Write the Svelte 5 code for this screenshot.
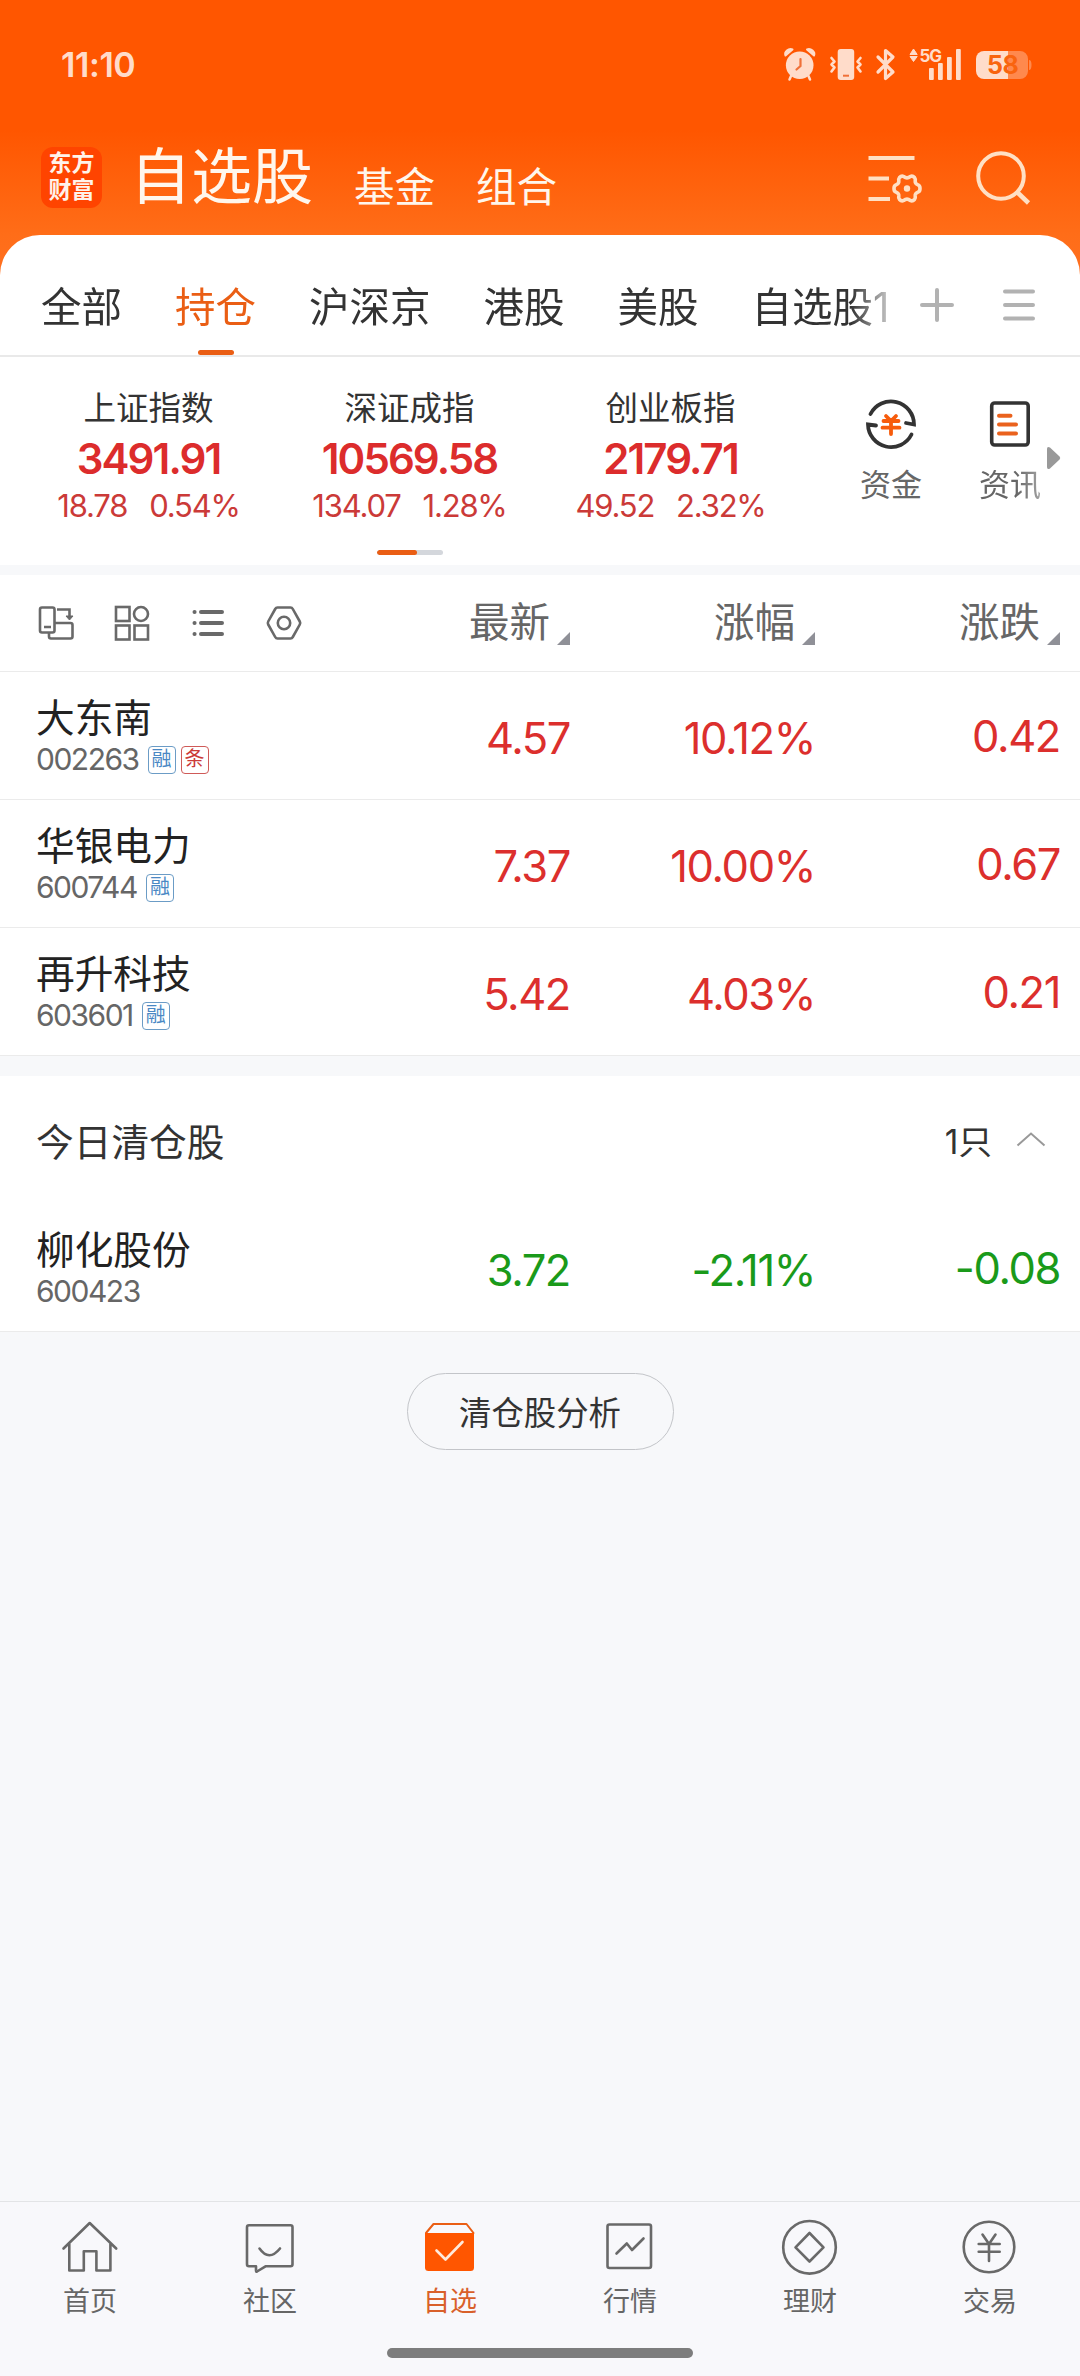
<script>
  const tabs = ['全部', '持仓', '沪深京', '港股', '美股', '自选股1'];
  const indices = [
    { name: '上证指数', value: '3491.91', change: '18.78', pct: '0.54%' },
    { name: '深证成指', value: '10569.58', change: '134.07', pct: '1.28%' },
    { name: '创业板指', value: '2179.71', change: '49.52', pct: '2.32%' }
  ];
  const columns = ['最新', '涨幅', '涨跌'];
  const stocks = [
    { name: '大东南', code: '002263', tags: ['融', '条'], last: '4.57', pct: '10.12%', diff: '0.42' },
    { name: '华银电力', code: '600744', tags: ['融'], last: '7.37', pct: '10.00%', diff: '0.67' },
    { name: '再升科技', code: '603601', tags: ['融'], last: '5.42', pct: '4.03%', diff: '0.21' }
  ];
  const closed = [
    { name: '柳化股份', code: '600423', tags: [], last: '3.72', pct: '-2.11%', diff: '-0.08' }
  ];
  const nav = ['首页', '社区', '自选', '行情', '理财', '交易'];
</script>

{#snippet stockRow(s, down)}
  <div class="row" class:down>
    <div class="stock">
      <div class="name">{s.name}</div>
      <div class="meta">
        <span class="code">{s.code}</span>
        {#each s.tags as t}<span class="tag" class:hot={t === '条'}>{t}</span>{/each}
      </div>
    </div>
    <div class="num">{s.last}</div>
    <div class="num">{s.pct}</div>
    <div class="num diff">{s.diff}</div>
  </div>
{/snippet}

<div class="screen">
  <header class="top">
    <div class="status">
      <span class="time">11:10</span>
      <svg class="sys" width="250" height="40" viewBox="782 45 250 40">
        <g fill="#ffdcca" stroke="none">
          <circle cx="799.7" cy="65.3" r="13.8" />
          <path d="M785.500 55.500c-1.500-3.500 3-7.500 7-6z M814 55.500c1.500-3.500-3-7.500-7-6z" stroke="#ffdcca" stroke-width="2" stroke-linejoin="round" />
          <path d="M791 76l-1.500 3.500M808.500 76l1.500 3.500" stroke="#ffdcca" stroke-width="2.500" stroke-linecap="round" />
          <rect x="837.700" y="49" width="16.500" height="31" rx="3" />
          <path d="M910 54.500l3.500-5.500 3.700 5.500zM910 56.500h7.200l-3.700 5z" stroke="#ffdcca" stroke-width="1" stroke-linejoin="round" />
          <rect x="929" y="68" width="4.800" height="12" rx="1" />
          <rect x="938" y="63" width="4.800" height="17" rx="1" />
          <rect x="947" y="57" width="4.800" height="23" rx="1" />
          <rect x="956" y="49" width="4.800" height="31" rx="1" />
        </g>
        <path d="M800.500 59v7l-4 3.500" fill="none" stroke="#f07038" stroke-width="2.200" stroke-linecap="round" />
        <path d="M843 75.700h6" stroke="#f07038" stroke-width="2" />
        <g fill="none" stroke="#ffdcca" stroke-width="2.600" stroke-linecap="round" stroke-linejoin="round">
          <path d="M831.500 58l3 3.500-3 3 3 3-3 4M860.500 58l-3 3.500 3 3-3 3 3 4" />
          <path stroke-width="3.200" d="M878 57l15 15-7.500 6.500v-28l7.500 6.500-15 15" />
        </g>
        <text class="net" x="919.500" y="61.800">5G</text>
        <path d="M1008 51h12a8 8 0 0 1 8 8v12a8 8 0 0 1-8 8h-12z M1029 60q2.500 0 2.500 5t-2.500 5z" fill="#ff894d" />
        <path d="M1008 51h-24a8 8 0 0 0-8 8v12a8 8 0 0 0 8 8h24z" fill="#ffdcca" />
        <text class="level" x="987" y="74">58</text>
      </svg>
    </div>
    <div class="titlebar">
      <div class="logo"><span>东方</span><span>财富</span></div>
      <h1>自选股</h1>
      <span class="sub">基金</span>
      <span class="sub">组合</span>
      <span class="grow"></span>
      <svg class="settings" width="54" height="54" viewBox="866 150 54 54" fill="none" stroke="#ffe0c4" stroke-width="4">
        <path d="M868.500 157h46M868.500 177.500h20.500M868.500 198h21.500" />
        <path stroke-width="3.600" stroke-linejoin="round" d="M899.500 176.500q2-2.200 4.200-1 3.300 2.600 6.600 0 2.200-1.200 4.200 1 1.200 1.600.7 3.500-.2 2.800 2.800 3.900 2.100.8 2 3.600.1 2.800-2 3.600-3 1.100-2.800 3.900.5 1.900-.7 3.500-2 2.200-4.200 1-3.300-2.600-6.600 0-2.200 1.200-4.200-1-1.200-1.600-.7-3.500.2-2.800-2.800-3.900-2.100-.8-2-3.600-.1-2.800 2-3.600 3-1.100 2.800-3.900-.5-1.900.7-3.500z" />
        <circle cx="907" cy="187.500" r="3.200" fill="#ffe0c4" stroke="none" />
      </svg>
      <svg width="60" height="60" viewBox="973 147 60 60" fill="none" stroke="#ffe0c4" stroke-width="4">
        <circle cx="1001" cy="175" r="22.800" /><path d="M1017 191l11.500 11" stroke-width="4.500" />
      </svg>
    </div>
    <nav class="tabs">
      <div class="tablist">
        {#each tabs as t, i}<span class="tab" class:active={i === 1}>{t}</span>{/each}
      </div>
      <svg class="plus" width="36" height="36" viewBox="0 0 36 36"><path d="M3 18h30M18 3v30" /></svg>
      <svg class="menu" width="36" height="36" viewBox="0 0 36 36"><path d="M4 4.500h28M4 18h28M4 31.500h28" /></svg>
    </nav>
  </header>

  <section class="indices">
    <div class="cards">
      {#each indices as x}
        <div class="index">
          <div class="iname">{x.name}</div>
          <div class="ivalue">{x.value}</div>
          <div class="ichange"><span>{x.change}</span><span>{x.pct}</span></div>
        </div>
      {/each}
      <div class="pager"><i></i></div>
    </div>
    <div class="quick">
      <svg width="54" height="54" viewBox="864 398 54 54" fill="none" stroke="#333" stroke-width="3.800" stroke-linecap="round">
        <path d="M870.500 415A23 23 0 0 1 914 425.500l-8-1.500" />
        <path d="M911.500 435.500A23 23 0 0 1 868 425.500l8 1" />
        <path d="M886 417l5 5 5-5M891 422v13M883.500 422h15M882.500 428.700h17" stroke="#f75c0c" />
      </svg>
      <span>资金</span>
    </div>
    <div class="quick news">
      <svg width="54" height="54" viewBox="983 398 54 54" fill="none" stroke="#333" stroke-width="3.600">
        <rect x="991.700" y="404" width="36.500" height="42" rx="3" />
        <path d="M999 416.700h11.500M999 425.500h17M999 434.500h17" stroke="#ea621d" stroke-linecap="round" stroke-width="4" />
      </svg>
      <span>资讯</span>
    </div>
    <svg class="more" width="14" height="24" viewBox="0 0 14 24"><path d="M0 3q0-3 3-1.500l9.500 9q1.500 1.500 0 3l-9.500 9Q0 24 0 21z" fill="#999" /></svg>
  </section>

  <section class="list">
    <div class="head">
      <div class="tools">
        <svg width="36" height="36" viewBox="0 0 36 36">
          <rect x="2" y="2.500" width="14.500" height="25" rx="2" /><path d="M6 22h7M19 4.500h12.500V12M17 18h15.500q2 0 2 2v11.500q0 2-2 2H13q-2 0-2-2v-4" /><path d="M28 11h7l-3.500 4z" fill="#696969" stroke-width="1" />
        </svg>
        <svg width="36" height="36" viewBox="0 0 36 36">
          <rect x="2" y="2" width="13.500" height="14" /><circle cx="27" cy="9" r="7" /><rect x="2" y="20.500" width="13.500" height="14" /><rect x="20.500" y="20.500" width="13.500" height="14" />
        </svg>
        <svg width="36" height="36" viewBox="0 0 36 36">
          <path stroke-width="4" stroke-linecap="round" d="M11 7h21M11 18h21M11 29h21M4.500 7h.1M4.500 18h.1M4.500 29h.1" />
        </svg>
        <svg width="36" height="36" viewBox="0 0 36 36">
          <path stroke-linejoin="round" d="M11.500 2.500h13q1.500 0 2.300 1.500l7 12.500q.8 1.500 0 3l-7 12.500q-.8 1.500-2.300 1.500h-13q-1.500 0-2.300-1.500l-7-12.500q-.8-1.500 0-3l7-12.500q.8-1.500 2.300-1.500z" /><circle cx="18" cy="18" r="6.200" />
        </svg>
      </div>
      {#each columns as c}
        <div class="col"><span>{c}</span><svg width="13" height="13" viewBox="0 0 13 13"><path d="M13 0v13H0z" fill="#8f9097" /></svg></div>
      {/each}
    </div>
    {#each stocks as s}{@render stockRow(s, false)}{/each}
  </section>

  <section class="closed">
    <div class="chead">
      <span class="ctitle">今日清仓股</span>
      <span class="count">1只</span>
      <svg width="30" height="16" viewBox="0 0 30 16"><path d="M1.500 14.500L15 2.500l13.500 12" fill="none" stroke="#999" stroke-width="2" /></svg>
    </div>
    {#each closed as s}{@render stockRow(s, true)}{/each}
  </section>

  <button class="analyse">清仓股分析</button>

  <footer class="nav">
    <div class="items">
      {#each nav as n, i}
        <div class="item" class:on={i === 2}>
          <svg width="60" height="60" viewBox="0 0 60 60">
            {#if i === 0}
              <path d="M3.500 31.500L29.700 6l26.500 25.500M9.300 27v26.500h14.500V34.300h12.600v19.200h14V27" />
            {:else if i === 1}
              <path d="M9 8.300h41.500q2 0 2 2v37q0 2-2 2H25.500L17 54.500q-1 .5-1-1v-4.200H9q-2 0-2-2v-37q0-2 2-2z" /><path d="M19.500 31.500q9.500 13.500 20.500 0" />
            {:else if i === 2}
              <path d="M6 16l7.500-9H46.500l7 9" stroke-width="2" /><path d="M5 16h49v34.500q0 3.500-3.500 3.500h-42Q5 54 5 50.500z" fill="#ff5600" stroke="none" /><path d="M16.500 33.500l9 9 17-17.500" stroke="#ffeadb" />
            {:else if i === 3}
              <rect x="7.500" y="7.500" width="43.500" height="43.500" rx="2" /><path d="M16.500 36.500l10.300-10 5.200 6.500 11.500-11.500" />
            {:else if i === 4}
              <circle cx="29.500" cy="30.300" r="26.300" /><path stroke-linejoin="round" d="M29.500 16l14 14.300-14 14.200-14-14.200z" />
            {:else}
              <circle cx="29" cy="30" r="25.300" /><path d="M22.500 17.500l6.500 9.500 6.500-9.500M18.700 27h21M18.700 34.700h21M29 27v17" />
            {/if}
          </svg>
          <span>{n}</span>
        </div>
      {/each}
    </div>
    <div class="homebar"></div>
  </footer>
</div>

<style>
  :global(body) { background: #f7f8fa; }
  .screen {
    box-sizing: border-box;
    width: 1080px; height: 2376px;
    display: flex; flex-direction: column;
    overflow: hidden;
    background: #f7f8fa; color: #333;
    font-family: Inter, "Noto Sans CJK SC", sans-serif;
    white-space: nowrap;
  }
  .screen * { box-sizing: border-box; }
  svg { display: block; flex: none; overflow: visible; }

  .top { background: linear-gradient(#ff5600 0, #ff5600 130px, #ff6d18 235px, #ff7020 275px); }
  .status { display: flex; justify-content: space-between; height: 120px; padding: 45px 48px 0 61px; }
  .time { color: #ffdcca; font-size: 34px; font-weight: 600; line-height: 39px; letter-spacing: -0.4px; }
  .net { fill: #ffdcca; font-size: 17px; font-weight: 700; letter-spacing: -1px; }
  .level { fill: #f9640f; font-size: 25px; font-weight: 700; letter-spacing: -0.5px; }

  .titlebar { display: flex; align-items: center; height: 115px; padding: 0 47px 0 41px; }
  .logo {
    display: flex; flex-direction: column; align-items: center; justify-content: center;
    width: 61px; height: 61px; border-radius: 12px; background: #ff4400; color: #fff3ea;
    font-size: 23px; line-height: 27px; font-weight: 700; padding-bottom: 2px;
  }
  h1 { margin: -1px 0 0 28px; font-size: 61px; line-height: 60px; font-weight: 400; color: #fff6ec; }
  .sub { margin-left: 41px; padding-top: 21px; font-size: 40.500px; line-height: 40px; color: #fff6ec; }
  .grow { flex: 1; }
  .settings { margin-right: 53px; }

  .tabs {
    display: flex; align-items: center; height: 122px; padding: 0 0 0 41px;
    background: #fff; border-radius: 40px 40px 0 0; border-bottom: 2px solid #e9e9e9;
  }
  .tablist {
    display: flex; gap: 53px; width: 856px; height: 120px;
    -webkit-mask-image: linear-gradient(90deg, #000 810px, rgba(0, 0, 0, 0.25) 849px);
    mask-image: linear-gradient(90deg, #000 810px, rgba(0, 0, 0, 0.25) 849px);
  }
  .tab { display: flex; flex-direction: column; align-items: center; flex: none; padding-top: 43px; font-size: 40.500px; line-height: 60px; height: 120px; }
  .active { color: #ea5e14; }
  .active::after { content: ""; width: 36px; height: 5px; margin-top: 12px; border-radius: 3px; background: #ea5e14; }
  .plus, .menu { fill: none; stroke: #b2b2b2; stroke-width: 4; stroke-linecap: round; margin-top: 20px; }
  .plus { margin-left: 22px; }
  .menu { margin-left: 46px; }

  .indices { display: flex; height: 208px; background: #fff; }
  .cards { flex: none; display: grid; grid-template-columns: repeat(3, 261px); padding: 31px 0 0 18px; width: 860px; align-content: start; }
  .index { display: flex; flex-direction: column; align-items: center; }
  .iname { font-size: 32.500px; line-height: 42px; }
  .ivalue { margin-top: 4px; color: #dc2c2c; font-size: 42px; line-height: 50px; font-weight: 600; letter-spacing: -1.900px; }
  .ichange { display: flex; gap: 22px; margin-top: 0; color: #cb3a38; font-size: 31px; line-height: 44px; letter-spacing: -1.200px; }
  .pager { grid-column: 2; justify-self: center; width: 66px; height: 5px; margin-top: 22px; border-radius: 3px; background: #d4d7dc; overflow: hidden; }
  .pager i { display: block; width: 40px; height: 5px; border-radius: 3px; background: #ea5e14; }
  .quick { flex: none; display: flex; flex-direction: column; align-items: center; padding-top: 40px; width: 62px; color: #666; font-size: 31px; line-height: 44px; }
  .quick span { margin-top: 12px; }
  .news { margin-left: 57px; }
  .news span { -webkit-mask-image: linear-gradient(90deg, #000 60%, rgba(0, 0, 0, 0.6)); mask-image: linear-gradient(90deg, #000 60%, rgba(0, 0, 0, 0.6)); }
  .more { margin: 89px 0 0 6px; }

  .list { margin-top: 10px; background: #fff; }
  .head, .row { display: grid; grid-template-columns: 306px 264px 245px 245px; border-bottom: 1.500px solid #ebebeb; }
  .head { height: 97px; align-items: center; }
  .tools { display: flex; gap: 40px; padding-left: 38px; width: 320px; }
  .tools svg { fill: none; stroke: #696969; stroke-width: 2.600; }
  .col { display: flex; justify-content: flex-end; align-items: center; color: #666; font-size: 40.500px; line-height: 60px; }
  .col svg { margin: 30px 0 0 7px; }
  .row { height: 128px; color: #dc2f2d; }
  .stock { padding: 22px 0 0 36px; }
  .name { color: #222; font-size: 38.700px; line-height: 48px; }
  .meta { display: flex; align-items: center; height: 36px; color: #666; font-size: 30px; line-height: 34px; }
  .code { letter-spacing: -1.500px; margin: -2px 9px 0 0; }
  .tag {
    width: 28px; height: 28px; margin: -1px 5px 0 0; border: 1.500px solid #6b9cc6; border-radius: 4px;
    color: #4a88c4; font-size: 20px; line-height: 25px; text-align: center;
  }
  .hot { border-color: #cf5a58; color: #cb3a38; }
  .num { padding-top: 36px; text-align: right; font-size: 43.500px; line-height: 60px; letter-spacing: -1.400px; }
  .diff { padding-top: 34px; }
  .down { color: #1a9a1a; }

  .closed { margin-top: 20px; background: #fff; }
  .chead { display: flex; align-items: center; height: 128px; padding: 0 34px 2px 36px; }
  .ctitle { flex: 1; font-size: 37.700px; }
  .count { margin-right: 24px; font-size: 33.500px; }

  .analyse {
    align-self: center; width: 267px; height: 77px; margin-top: 41px; border: 1.500px solid #c3c5c9; border-radius: 39px;
    background: transparent; color: #333; font: inherit; font-size: 32.400px; padding: 0 0 2px; white-space: nowrap;
  }

  .nav { display: flex; flex-direction: column; align-items: center; height: 175px; margin-top: auto; border-top: 1.500px solid #e3e4e6; background: #f8f8fb; }
  .items { display: grid; grid-template-columns: repeat(6, 180px); height: 146px; padding-top: 15px; }
  .item { display: flex; flex-direction: column; align-items: center; color: #666; font-size: 27px; line-height: 36px; }
  .item svg { fill: none; stroke: #696969; stroke-width: 2.600; stroke-linecap: round; stroke-linejoin: round; }
  .item span { margin-top: 7px; }
  .on { color: #d9602a; }
  .on svg { stroke: #ea5e14; }
  .homebar { width: 306px; height: 10px; border-radius: 5px; background: #7d7d7d; }
</style>
